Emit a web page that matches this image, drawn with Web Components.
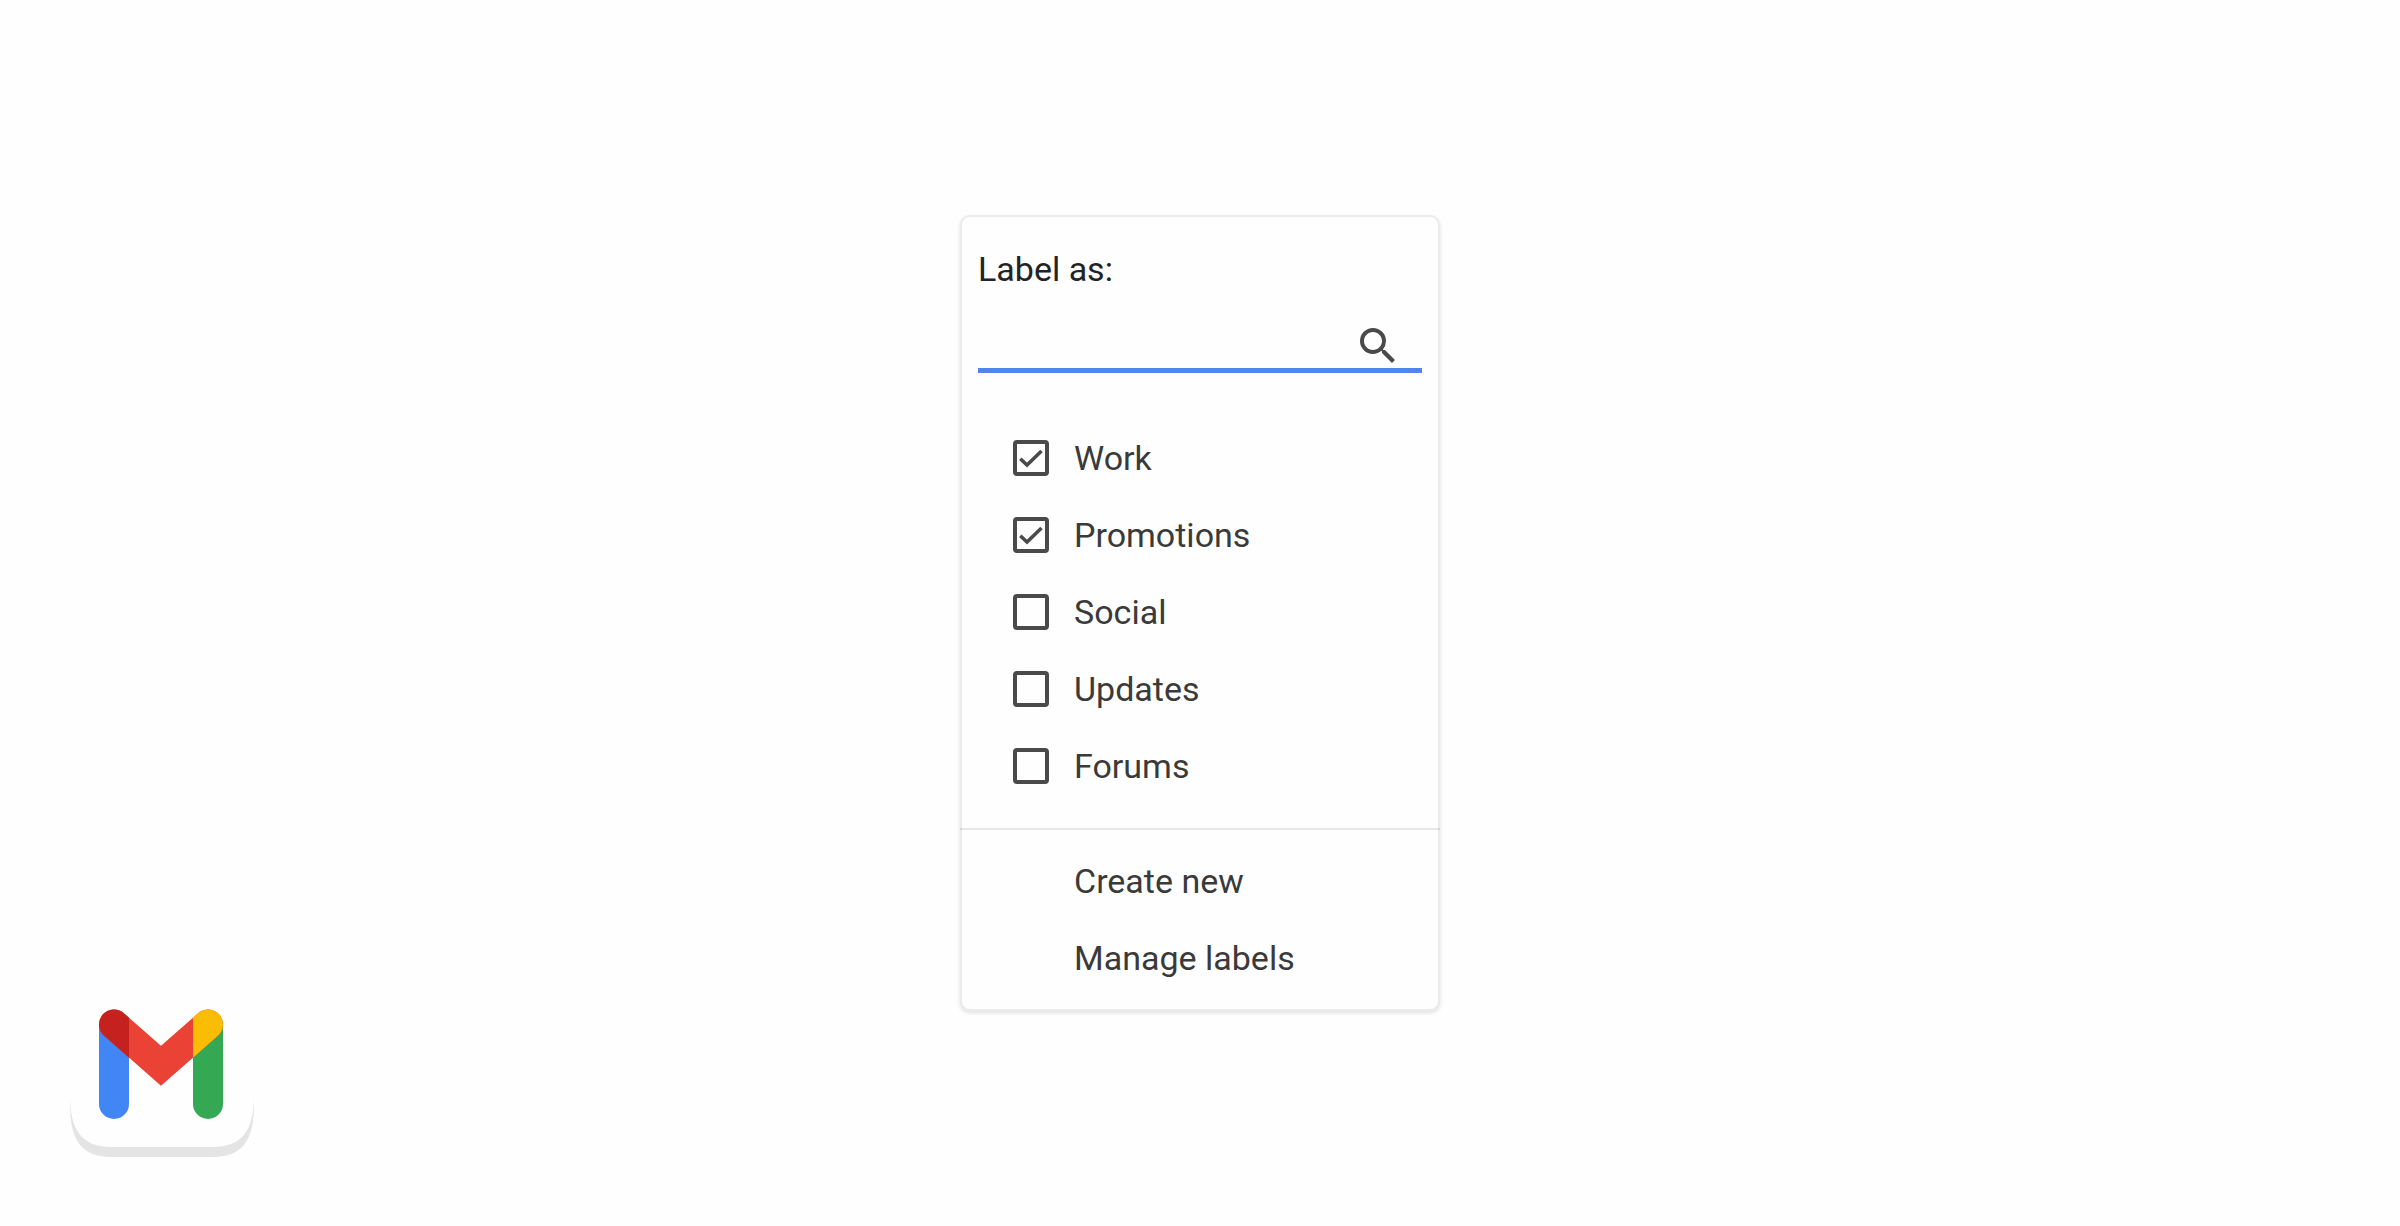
<!DOCTYPE html>
<html lang="en">
<head>
<meta charset="utf-8">
<meta name="viewport" content="width=device-width, initial-scale=1">
<title>Label as</title>
<style>
  html, body { height: 100%; }
  body {
    margin: 0;
    background: #fefefe;
    color: #3a3a3a;
    font: 34px/40px Roboto, "Liberation Sans", sans-serif;
  }
</style>
</head>
<body>
<app-stage>
  <label-menu>
    <label-search slot="search">Label as:</label-search>
    <label-option checked>Work</label-option>
    <label-option checked>Promotions</label-option>
    <label-option>Social</label-option>
    <label-option>Updates</label-option>
    <label-option>Forums</label-option>
    <menu-action slot="actions">Create new</menu-action>
    <menu-action slot="actions">Manage labels</menu-action>
  </label-menu>
  <mail-logo slot="logo"></mail-logo>
</app-stage>

<script>
  const define = (name, html, setup) => {
    const template = document.createElement('template');
    template.innerHTML = html;
    customElements.define(name, class extends HTMLElement {
      constructor() {
        super();
        this.attachShadow({ mode: 'open' }).append(template.content.cloneNode(true));
      }
      connectedCallback() {
        if (setup) setup(this);
      }
    });
  };

  // Full-window stage: content in the middle, logo in the bottom left corner.
  define('app-stage', `
    <style>
      :host { display: grid; min-height: 100vh; }
      main, aside { grid-area: 1 / 1; }
      main { place-self: center; }
      aside { place-self: end start; padding: 0 0 69px 70px; }
    </style>
    <main><slot></slot></main>
    <aside><slot name="logo"></slot></aside>
  `);

  define('label-menu', `
    <style>
      :host {
        display: block;
        box-sizing: border-box;
        width: 480px;
        max-width: 100vw;
        border: 2px solid #ebebeb;
        border-radius: 10px;
        background: #fefefe;
        box-shadow: 0 2px 4px rgba(0, 0, 0, .12);
      }
      header { padding: 32px 16px 0; }
      .options { padding: 46px 16px 24px 51px; }
      hr { height: 2px; margin: 0 -2px; border: 0; background: rgba(0, 0, 0, .09); }
      footer { padding: 12px 16px 13px 112px; }
    </style>
    <header><slot name="search"></slot></header>
    <div class="options"><slot></slot></div>
    <hr>
    <footer><slot name="actions"></slot></footer>
  `);

  define('label-search', `
    <style>
      :host { display: block; }
      label { display: block; color: #222326; }
      .field {
        display: flex;
        margin-top: 33px;
        padding-right: 20px;
        border-bottom: 5px solid #5383ec;
      }
      input {
        flex: 1;
        min-width: 0;
        padding: 0;
        border: 0;
        outline: 0;
        background: none;
        color: inherit;
        font: inherit;
      }
      svg { display: block; fill: #4a4a4a; }
    </style>
    <label for="query"><slot></slot></label>
    <div class="field">
      <input id="query" type="text" autocomplete="off">
      <svg width="48" height="46" viewBox="0 0 24 23" aria-hidden="true">
        <path d="M15.5 14h-.79l-.28-.27A6.471 6.471 0 0 0 16 9.5 6.5 6.5 0 1 0 9.5 16c1.61 0 3.09-.59 4.23-1.57l.27.28v.79l5 4.99L20.49 19l-4.99-5zm-6 0C7.01 14 5 11.99 5 9.5S7.01 5 9.5 5 14 7.01 14 9.5 11.99 14 9.5 14z"/>
      </svg>
    </div>
  `);

  define('label-option', `
    <style>
      :host { display: flex; align-items: center; height: 77px; }
      label { display: flex; align-items: center; gap: 25px; }
      .box { display: grid; }
      input, svg { grid-area: 1 / 1; width: 36px; height: 36px; }
      input {
        appearance: none;
        box-sizing: border-box;
        margin: 0;
        border: 4px solid #4a4a4a;
        border-radius: 4px;
      }
      svg { visibility: hidden; pointer-events: none; fill: none; stroke: #4a4a4a; stroke-width: 3.5; }
      input:checked + svg { visibility: visible; }
    </style>
    <label>
      <span class="box">
        <input type="checkbox">
        <svg viewBox="0 0 36 36" aria-hidden="true"><path d="M7.3 18.8 L14 25 L28.5 11"/></svg>
      </span>
      <span><slot></slot></span>
    </label>
  `, el => {
    el.shadowRoot.querySelector('input').checked = el.hasAttribute('checked');
  });

  define('menu-action', `
    <style>
      :host { display: flex; height: 77px; }
      button {
        flex: 1;
        padding: 0;
        border: 0;
        background: none;
        color: inherit;
        font: inherit;
        text-align: left;
      }
    </style>
    <button type="button"><slot></slot></button>
  `);

  define('mail-logo', `
    <style>
      :host { display: block; }
      svg { display: block; }
    </style>
    <svg width="184" height="194" viewBox="0 0 184 194" role="img" aria-label="Gmail">
      <defs>
        <path id="tile" d="M42 0H142C172 0 184 16 184 52V132C184 168 172 184 142 184H42C12 184 0 168 0 132V52C0 16 12 0 42 0Z"/>
        <path id="fold" d="M44 61.5 L91 102.8 L138 61.5" fill="none" stroke-width="30" stroke-linecap="round" stroke-linejoin="miter"/>
        <clipPath id="left"><rect x="20" y="40" width="39" height="70"/></clipPath>
        <clipPath id="right"><rect x="123" y="40" width="39" height="70"/></clipPath>
      </defs>
      <use href="#tile" y="10" fill="#e4e4e4"/>
      <use href="#tile" fill="#fefefe"/>
      <path d="M29 61H59V141A15 15 0 0 1 29 141Z" fill="#4285f4"/>
      <path d="M123 61H153V141A15 15 0 0 1 123 141Z" fill="#34a853"/>
      <use href="#fold" stroke="#ea4335"/>
      <g clip-path="url(#left)"><use href="#fold" stroke="#c5221f"/></g>
      <g clip-path="url(#right)"><use href="#fold" stroke="#fbbc04"/></g>
    </svg>
  `);
</script>
</body>
</html>
